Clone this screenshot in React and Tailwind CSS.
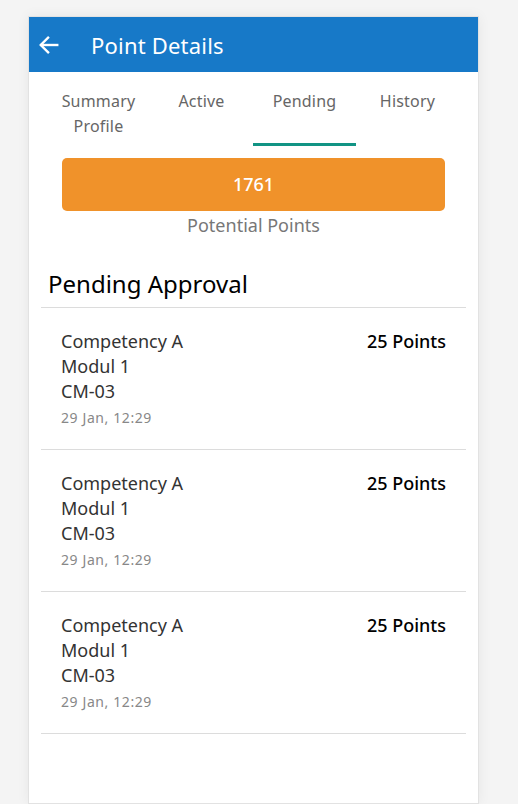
import React, { useState } from 'react';

const tabs = [
  { key: 'summary', label: 'Summary Profile' },
  { key: 'active', label: 'Active' },
  { key: 'pending', label: 'Pending' },
  { key: 'history', label: 'History' },
];

const pendingItems = [
  { competency: 'Competency A', modul: 'Modul 1', code: 'CM-03', date: '29 Jan, 12:29', points: 25 },
  { competency: 'Competency A', modul: 'Modul 1', code: 'CM-03', date: '29 Jan, 12:29', points: 25 },
  { competency: 'Competency A', modul: 'Modul 1', code: 'CM-03', date: '29 Jan, 12:29', points: 25 },
];

const BackArrow = () => (
  <svg width="22" height="22" viewBox="0 0 24 24" fill="none" stroke="white" strokeWidth="2.6" strokeLinecap="square">
    <path d="M21 12H4" />
    <path d="M11 4l-8 8 8 8" />
  </svg>
);

const App = () => {
  const [activeTab, setActiveTab] = useState('pending');

  return (
    <div className="min-h-[804px] bg-[#f4f4f4] font-['Noto_Sans',sans-serif] pt-4 pl-7 pr-10">
      <div className="w-[451px] min-h-[788px] bg-white border border-[#e2e2e2] shadow-[0_0_12px_rgba(0,0,0,0.06)]">
        {/* header */}
        <div className="h-[55px] bg-[#1779c8] flex items-center px-[9px] text-white">
          <BackArrow />
          <span className="ml-[31px] text-[22px] leading-none tracking-[0.2px]">Point Details</span>
        </div>

        {/* tabs */}
        <div className="flex px-[18px] pt-[17px]">
          {tabs.map((tab) => (
            <button
              key={tab.key}
              onClick={() => setActiveTab(tab.key)}
              className={`w-[103px] h-[57px] text-[16px] leading-[25px] tracking-[0.2px] text-[#666] border-b-[3px] ${
                activeTab === tab.key ? 'border-[#119484]' : 'border-transparent'
              } flex justify-center`}
            >
              <span className="block w-[84px] text-center">{tab.label}</span>
            </button>
          ))}
        </div>

        {/* potential points */}
        <div className="px-[33px] pt-[12px]">
          <div className="h-[53px] rounded-[5px] bg-[#f0922a] flex items-center justify-center text-white text-[18px] font-medium">
            1761
          </div>
          <div className="text-center text-[18px] text-[#777] mt-[3px] leading-[22px]">Potential Points</div>
        </div>

        {/* pending list */}
        <div className="px-[12px] mt-[35px]">
          <h2 className="pl-[7px] text-[24px] leading-[26px] text-black pb-[10px] border-b border-[#dcdcdc]">
            Pending Approval
          </h2>
          {pendingItems.map((item, i) => (
            <div key={i} className="h-[142px] border-b border-[#dcdcdc] flex justify-between pl-[20px] pr-[20px] pt-[21px]">
              <div className="text-[18px] leading-[25px] text-[#333]">
                <div>{item.competency}</div>
                <div>{item.modul}</div>
                <div>{item.code}</div>
                <div className="text-[14px] tracking-[0.6px] text-[#888] mt-[1px]">{item.date}</div>
              </div>
              <div className="text-[18px] leading-[25px] font-medium text-black">{item.points} Points</div>
            </div>
          ))}
        </div>
      </div>
    </div>
  );
};

export default App;
